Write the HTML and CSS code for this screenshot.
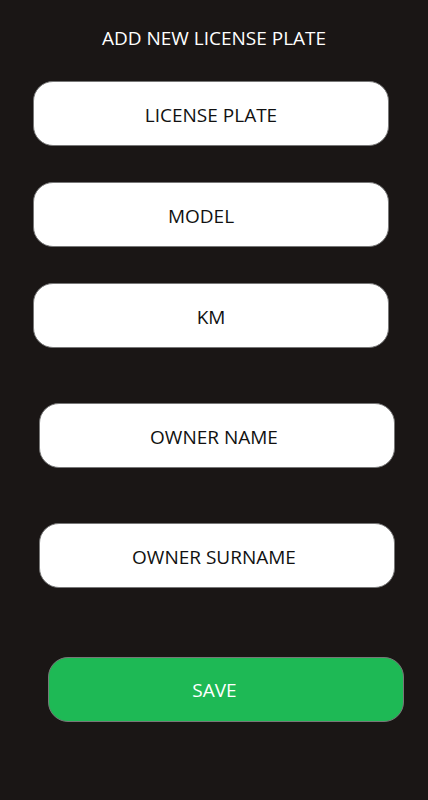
FILE: index.html
```html
<!DOCTYPE html>
<html>
<head>
<meta charset="utf-8">
<link rel="stylesheet" href="styles.css">
</head>
<body>
<main class="screen">
  <h1 class="title">ADD NEW LICENSE PLATE</h1>
  <div class="field f1">LICENSE PLATE</div>
  <div class="field f2">MODEL</div>
  <div class="field f3">KM</div>
  <div class="field f4">OWNER NAME</div>
  <div class="field f5">OWNER SURNAME</div>
  <button class="save">SAVE</button>
</main>
</body>
</html>
```
FILE: styles.css
```css
html, body {
  margin: 0;
  padding: 0;
  background: #1a1615;
}
.screen {
  width: 428px;
  height: 800px;
  display: flex;
  flex-direction: column;
  align-items: flex-start;
  font-family: "Open Sans", "Noto Sans", sans-serif;
}
.title {
  margin: 25px 0 0 0;
  width: 428px;
  text-align: center;
  color: #ffffff;
  font-size: 19px;
  font-weight: 400;
  line-height: 26px;
}
.field, .save {
  box-sizing: border-box;
  width: 356px;
  height: 65px;
  border-radius: 20px;
  border: 1px solid #777;
  display: flex;
  align-items: center;
  justify-content: center;
  font-size: 19px;
  font-family: inherit;
  padding-top: 2px;
}
.field {
  background: #ffffff;
  color: #111;
}
.f1 { margin: 30px 0 0 33px; }
.f2 { margin: 36px 0 0 33px; padding-right: 20px; }
.f3 { margin: 36px 0 0 33px; }
.f4 { margin: 55px 0 0 39px; padding-right: 6px; }
.f5 { margin: 55px 0 0 39px; padding-right: 6px; }
.save {
  margin: 69px 0 0 48px;
  background: #1eb955;
  color: #ffffff;
  padding-left: 0;
  padding-right: 23px;
}
```
